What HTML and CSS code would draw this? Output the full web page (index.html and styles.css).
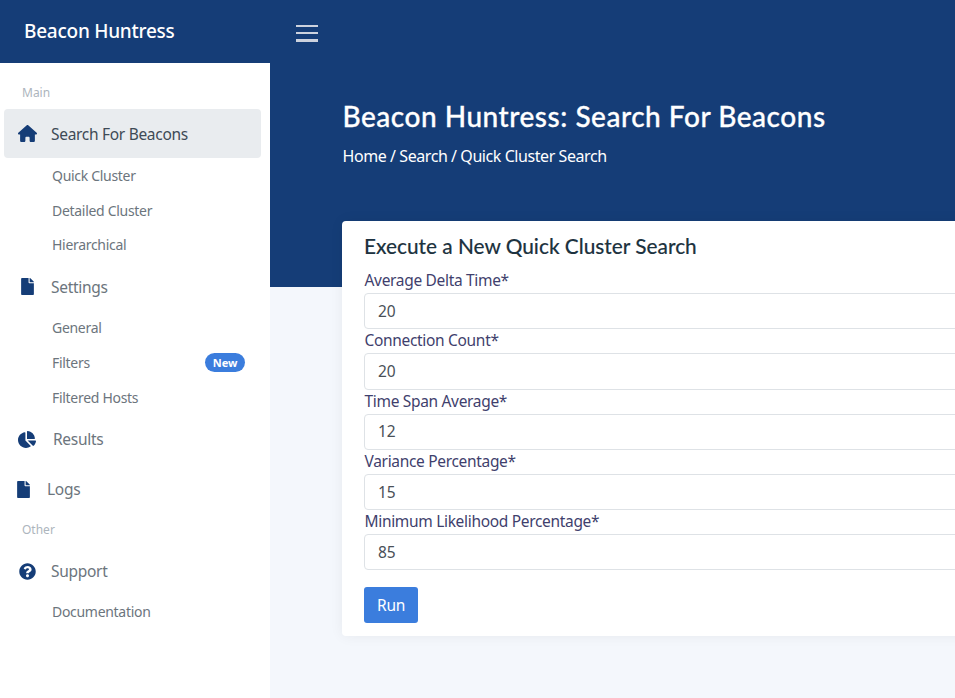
FILE: index.html
```html
<!DOCTYPE html>
<html lang="en">
<head>
<meta charset="utf-8">
<title>Beacon Huntress</title>
<link rel="stylesheet" href="styles.css">
</head>
<body>
<div class="app">
  <aside class="sidebar">
    <div class="brand">Beacon Huntress</div>
    <nav class="nav">
      <div class="section section-main">Main</div>
      <a class="item active"><span class="ico"><svg class="i-home" viewBox="0 0 576 512"><path d="M575.8 255.5c0 18-15 32.1-32 32.1h-32l.7 160.2c0 2.7-.2 5.4-.5 8.1V472c0 22.1-17.9 40-40 40H456c-1.1 0-2.2 0-3.3-.1c-1.4 .1-2.8 .1-4.2 .1H416 392c-22.1 0-40-17.9-40-40V448 384c0-17.7-14.3-32-32-32H256c-17.7 0-32 14.3-32 32v64 24c0 22.1-17.9 40-40 40H160 128.1c-1.5 0-3-.1-4.5-.2c-1.2 .1-2.4 .2-3.6 .2H104c-22.1 0-40-17.9-40-40V360c0-.9 0-1.9 .1-2.8V287.6H32c-18 0-32-14-32-32.1c0-9 3-17 10-24L266.4 8c7-7 15-8 22-8s15 2 21 7L564.8 231.5c8 7 12 15 11 24z"/></svg></span>Search For Beacons</a>
      <a class="sub">Quick Cluster</a>
      <a class="sub">Detailed Cluster</a>
      <a class="sub">Hierarchical</a>
      <a class="item"><span class="ico"><svg class="i-file" viewBox="0 0 384 512"><path d="M224 136V0H24C10.7 0 0 10.7 0 24v464c0 13.3 10.7 24 24 24h336c13.3 0 24-10.7 24-24V160H248c-13.2 0-24-10.8-24-24zm160-14.1v6.1H256V0h6.1c6.4 0 12.5 2.5 17 7l97.9 98c4.5 4.5 7 10.6 7 16.9z"/></svg></span>Settings</a>
      <a class="sub sub-first">General</a>
      <a class="sub">Filters<span class="badge">New</span></a>
      <a class="sub">Filtered Hosts</a>
      <a class="item"><span class="ico ico-pie"><svg class="i-pie" viewBox="0 0 544 512"><path d="M527.79 288H290.5l158.03 158.03c6.04 6.04 15.98 6.53 22.19.68 38.7-36.46 65.32-85.61 73.13-140.86 1.34-9.46-6.51-17.85-16.06-17.85zm-15.83-64.8C503.72 103.74 408.26 8.28 288.8.04 279.68-.59 272 7.1 272 16.24V240h223.77c9.14 0 16.82-7.68 16.19-16.8zM224 288V50.71c0-9.55-8.39-17.4-17.84-16.06C86.99 51.49-4.1 155.6.14 280.37 4.5 408.51 114.83 513.59 243.03 511.98c50.4-.63 96.97-16.87 135.26-44.03 7.9-5.6 8.42-17.23 1.57-24.08L224 288z"/></svg></span>Results</a>
      <a class="item item-spaced"><span class="ico ico-logs"><svg class="i-file" viewBox="0 0 384 512"><path d="M224 136V0H24C10.7 0 0 10.7 0 24v464c0 13.3 10.7 24 24 24h336c13.3 0 24-10.7 24-24V160H248c-13.2 0-24-10.8-24-24zm160-14.1v6.1H256V0h6.1c6.4 0 12.5 2.5 17 7l97.9 98c4.5 4.5 7 10.6 7 16.9z"/></svg></span>Logs</a>
      <div class="section section-other">Other</div>
      <a class="item"><span class="ico"><svg class="i-help" viewBox="0 0 512 512"><path d="M504 256c0 136.997-111.043 248-248 248S8 392.997 8 256C8 119.083 119.043 8 256 8s248 111.083 248 248zM262.655 90c-54.497 0-89.255 22.957-116.549 63.758-3.536 5.286-2.353 12.415 2.715 16.258l34.699 26.31c5.205 3.947 12.621 3.008 16.665-2.122 17.864-22.658 30.113-35.797 57.303-35.797 20.429 0 45.698 13.148 45.698 32.958 0 14.976-12.363 22.667-32.534 33.976C247.128 238.528 216 254.941 216 296v4c0 6.627 5.373 12 12 12h56c6.627 0 12-5.373 12-12v-1.333c0-28.462 83.186-29.647 83.186-106.667 0-58.002-60.165-102-116.531-102zM256 338c-25.365 0-46 20.635-46 46 0 25.364 20.635 46 46 46s46-20.636 46-46c0-25.365-20.635-46-46-46z"/></svg></span>Support</a>
      <a class="sub sub-last">Documentation</a>
    </nav>
  </aside>
  <main class="main">
    <div class="hero">
      <div class="topbar"><button class="burger" aria-label="Menu"><span></span><span></span><span></span></button></div>
      <div class="hero-text">
        <h1>Beacon Huntress: Search For Beacons</h1>
        <p class="crumbs">Home / Search / Quick Cluster Search</p>
      </div>
    </div>
    <section class="card">
      <h2>Execute a New Quick Cluster Search</h2>
      <form class="form">
        <label class="label">Average Delta Time*</label>
        <input class="input" value="20">
        <label class="label">Connection Count*</label>
        <input class="input" value="20">
        <label class="label">Time Span Average*</label>
        <input class="input" value="12">
        <label class="label">Variance Percentage*</label>
        <input class="input" value="15">
        <label class="label">Minimum Likelihood Percentage*</label>
        <input class="input" value="85">
        <button class="run" type="button">Run</button>
      </form>
    </section>
  </main>
</div>
</body>
</html>
```
FILE: styles.css
```css
* { box-sizing: border-box; }
html, body { margin: 0; height: 100%; overflow: hidden; }
body { font-family: "Noto Sans", "Open Sans", sans-serif; background: #f4f7fc; color: #495057; }
.app { display: grid; grid-template-columns: 270px 1fr; width: 955px; height: 698px; overflow: hidden; }
.sidebar { background: #fff; height: 698px; }
.brand { height: 63px; background: #153d77; color: #fff; font-size: 19px; font-weight: 500; padding: 0 0 0 24px; line-height: 62px; letter-spacing: -0.25px; }
.nav { display: flex; flex-direction: column; }
.section { color: #adb5bd; font-size: 12px; padding-left: 22px; }
.section-main { height: 46px; line-height: 59px; }
.section-other { height: 33px; line-height: 32px; }
.item { display: flex; align-items: center; height: 49px; margin: 0 9px 0 4px; border-radius: 4px; color: #6c757d; font-size: 15.5px; letter-spacing: -0.3px; }
.item.active { background: #e9ecef; color: #3e4a56; }
.ico { width: 47px; flex: none; display: flex; justify-content: center; fill: #153d77; }
.ico svg { display: block; height: 17px; }
.i-home { width: 19px; }
.i-file { width: 13px; }
.i-pie { width: 18px; }
.i-help { width: 17px; }
.item-spaced { margin-top: 1px; }
.ico-pie { width: 49px; justify-content: flex-start; padding-left: 14px; }
.ico-logs { width: 43px; justify-content: flex-start; padding-left: 13px; }
.sub { display: flex; align-items: center; height: 34.8px; padding: 0 25px 0 52px; font-size: 14px; color: #6c757d; letter-spacing: -0.3px; }
.sub-first { margin-top: -1px; }
.sub-last { margin-top: -2px; }
.badge { margin-left: auto; background: #3b7ddd; color: #fff; font-size: 11px; font-weight: 700; height: 19px; line-height: 19px; padding: 0 7.5px; border-radius: 10px; letter-spacing: 0; }
.main { min-width: 0; }
.hero { background: #153d77; height: 287px; }
.topbar { height: 63px; padding: 25px 0 0 26px; }
.burger { display: flex; flex-direction: column; gap: 5px; width: 22px; padding: 0; border: 0; background: none; }
.burger span { display: block; height: 2px; background: #ccd2de; }
.burger span:last-child { height: 3px; }
.hero-text { padding: 36px 0 0 72.5px; color: #fff; }
h1 { margin: 0; font-family: "Lato", sans-serif; font-size: 28px; font-weight: 500; line-height: 34px; letter-spacing: 0.52px; -webkit-text-stroke: 0.3px #fff; }
.crumbs { margin: 11px 0 0; font-size: 16px; line-height: 24px; letter-spacing: -0.43px; }
.card { position: relative; margin: -66px 0 0 72px; width: 720px; height: 415px; background: #fff; border-radius: 4px; box-shadow: 0 0 14px rgba(33, 37, 41, .06); padding: 9px 22px 0 22px; }
h2 { margin: 0; font-family: "Lato", sans-serif; font-size: 20.8px; font-weight: 500; line-height: 32px; color: #1d3340; -webkit-text-stroke: 0.1px #1d3340; }
.form { display: flex; flex-direction: column; align-items: flex-start; }
.label { height: 24px; line-height: 23px; font-size: 15.5px; color: #3f3f6d; letter-spacing: -0.32px; padding-left: 0.5px; }
.label:first-child { margin-top: 7px; }
.input { width: 100%; height: 36.3px; border: 1px solid #dee2e6; border-radius: 4px; padding: 0 13px 1px; font: inherit; font-size: 15.5px; color: #495057; background: #fff; }
.run { margin-top: 16.5px; width: 54px; height: 36px; background: #3b7ddd; color: #fff; border: 0; border-radius: 3px; font: inherit; font-size: 15.5px; letter-spacing: -0.3px; }
```
